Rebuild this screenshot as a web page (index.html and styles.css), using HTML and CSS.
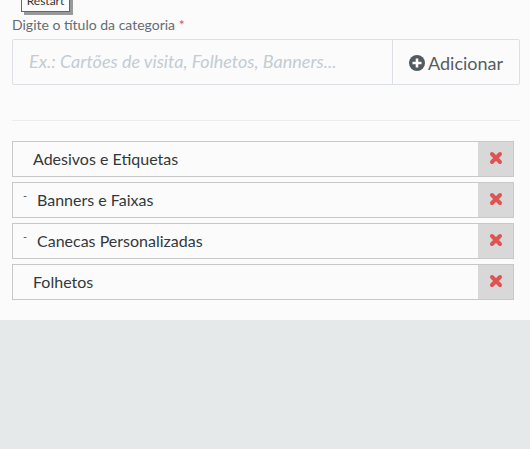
FILE: index.html
```html
<!DOCTYPE html>
<html lang="en">
<head>
  <meta charset="UTF-8" />
  <meta name="viewport" content="width=device-width, initial-scale=1.0" />
  <title>Categorias</title>
  <link rel="stylesheet" href="styles.css">
</head>
<body>

<div class="panel">
  <button class="restart-btn">Restart</button>

  <label class="field-label">Digite o título da categoria <span class="required">*</span></label>
  <div class="input-group">
    <input class="title-input" type="text" placeholder="Ex.: Cartões de visita, Folhetos, Banners...">
    <button class="add-btn">
      <svg class="add-icon" viewBox="0 0 16 16"><circle cx="8" cy="8" r="8" fill="#555a5f"/><path d="M8 3.5v9M3.5 8h9" stroke="#fff" stroke-width="2.6"/></svg>
      Adicionar
    </button>
  </div>

  <hr class="divider">

  <div class="category-list">
    <div class="category">
      <span class="category-name">Adesivos e Etiquetas</span>
      <button class="remove-btn"><svg class="remove-icon" viewBox="0 0 14 14"><path d="M3 3l8 8M11 3l-8 8" stroke="#e05353" stroke-width="4" stroke-linecap="round"/></svg></button>
    </div>
    <div class="category">
      <span class="dash">-</span>
      <span class="category-name">Banners e Faixas</span>
      <button class="remove-btn"><svg class="remove-icon" viewBox="0 0 14 14"><path d="M3 3l8 8M11 3l-8 8" stroke="#e05353" stroke-width="4" stroke-linecap="round"/></svg></button>
    </div>
    <div class="category">
      <span class="dash">-</span>
      <span class="category-name">Canecas Personalizadas</span>
      <button class="remove-btn"><svg class="remove-icon" viewBox="0 0 14 14"><path d="M3 3l8 8M11 3l-8 8" stroke="#e05353" stroke-width="4" stroke-linecap="round"/></svg></button>
    </div>
    <div class="category">
      <span class="category-name">Folhetos</span>
      <button class="remove-btn"><svg class="remove-icon" viewBox="0 0 14 14"><path d="M3 3l8 8M11 3l-8 8" stroke="#e05353" stroke-width="4" stroke-linecap="round"/></svg></button>
    </div>
  </div>
</div>

</body>
</html>
```

FILE: styles.css
```css
body {
  font-family: Lato, sans-serif;
  background-color: #e6e9e9;
  margin: 0;
  padding: 0;
}

.panel {
  position: relative;
  box-sizing: border-box;
  height: 320px;
  padding: 17px 10px 0 12px;
  background-color: #fbfbfb;
  overflow: hidden;
}

.restart-btn {
  position: absolute;
  left: 21px;
  top: -9px;
  width: 49px;
  height: 21px;
  padding: 0 0 2px;
  font-family: Lato, sans-serif;
  font-size: 12px;
  color: #333;
  background: #fbfbfb;
  border: 1px solid #666;
  box-shadow: 3px 3px 0 #999;
}

.field-label {
  display: block;
  height: 22px;
  font-size: 14px;
  line-height: 16px;
  color: #656b70;
}

.required {
  color: #e05353;
}

.input-group {
  display: flex;
  height: 46px;
  box-sizing: border-box;
  border: 1px solid #dce0e4;
  border-radius: 2px;
}

.title-input {
  flex: 1;
  min-width: 0;
  padding: 0 16px 2px;
  font-family: Lato, sans-serif;
  font-size: 18px;
  font-style: italic;
  background: transparent;
  border: none;
  outline: none;
}

.title-input::placeholder {
  color: #c3ccd2;
  opacity: 1;
}

.add-btn {
  display: flex;
  align-items: center;
  gap: 3px;
  width: 127px;
  padding: 2px 0 0 16px;
  font-family: Lato, sans-serif;
  font-size: 18px;
  color: #565c61;
  background: transparent;
  border: none;
  border-left: 1px solid #dce0e4;
}

.add-icon {
  width: 16px;
  height: 16px;
}

.divider {
  height: 1px;
  margin: 35px 0 20px;
  background-color: #ebeced;
  border: none;
}

.category-list {
  display: flex;
  flex-direction: column;
  gap: 5px;
  width: 502px;
}

.category {
  display: flex;
  align-items: center;
  box-sizing: border-box;
  height: 36px;
  padding-left: 20px;
  background-color: #fbfbfb;
  border: 1px solid #c8c8c8;
}

.dash {
  width: 0;
  margin-left: -10px;
  margin-right: 14px;
  font-size: 11px;
  line-height: 10px;
  color: #555;
  align-self: flex-start;
  margin-top: 8px;
}

.category-name {
  flex: 1;
  padding-bottom: 2px;
  font-size: 16px;
  color: #33383c;
}

.remove-btn {
  display: flex;
  align-items: center;
  justify-content: center;
  width: 35px;
  height: 100%;
  padding: 0 0 2px 1px;
  background-color: #d8d8d8;
  border: none;
}

.remove-icon {
  width: 14px;
  height: 14px;
}
```
